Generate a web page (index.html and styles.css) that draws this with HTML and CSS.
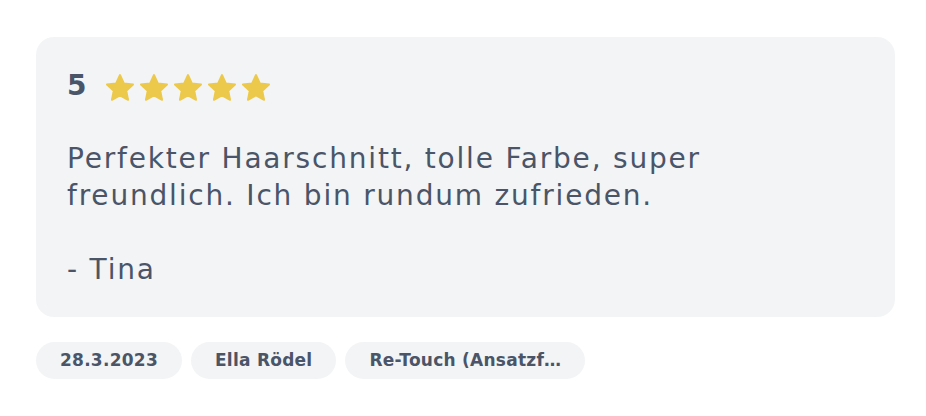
FILE: index.html
```html
<!DOCTYPE html>
<html lang="de">
<head>
<meta charset="utf-8">
<link rel="stylesheet" href="styles.css">
</head>
<body>
<div class="wrap">
  <div class="card">
    <div class="rating">
      <span class="score">5</span>
      <div class="stars">
        <svg class="star" viewBox="0 0 24 24"><path d="M12 1.6L15.12 8.31 22.46 9.2 17.04 14.24 18.47 21.5 12 17.9 5.53 21.5 6.96 14.24 1.54 9.2 8.88 8.31Z"/></svg>
        <svg class="star" viewBox="0 0 24 24"><path d="M12 1.6L15.12 8.31 22.46 9.2 17.04 14.24 18.47 21.5 12 17.9 5.53 21.5 6.96 14.24 1.54 9.2 8.88 8.31Z"/></svg>
        <svg class="star" viewBox="0 0 24 24"><path d="M12 1.6L15.12 8.31 22.46 9.2 17.04 14.24 18.47 21.5 12 17.9 5.53 21.5 6.96 14.24 1.54 9.2 8.88 8.31Z"/></svg>
        <svg class="star" viewBox="0 0 24 24"><path d="M12 1.6L15.12 8.31 22.46 9.2 17.04 14.24 18.47 21.5 12 17.9 5.53 21.5 6.96 14.24 1.54 9.2 8.88 8.31Z"/></svg>
        <svg class="star" viewBox="0 0 24 24"><path d="M12 1.6L15.12 8.31 22.46 9.2 17.04 14.24 18.47 21.5 12 17.9 5.53 21.5 6.96 14.24 1.54 9.2 8.88 8.31Z"/></svg>
      </div>
    </div>
    <p class="text">Perfekter Haarschnitt, tolle Farbe, super<br>freundlich. Ich bin rundum zufrieden.<br><br>- Tina</p>
  </div>
  <div class="tags">
    <span class="tag">28.3.2023</span>
    <span class="tag">Ella Rödel</span>
    <span class="tag">Re-Touch (Ansatzf…</span>
  </div>
</div>
</body>
</html>
```

FILE: styles.css
```css
* { box-sizing: border-box; }
html, body { margin: 0; padding: 0; background: #ffffff; }
body {
  font-family: "DejaVu Sans", "Open Sans", sans-serif;
  color: #4a5568;
}
.wrap {
  padding: 37px 31px 0 36px;
}
.card {
  background: #f3f4f6;
  border-radius: 18px;
  padding: 32px 31px 31px 31px;
  height: 280px;
}
.rating {
  display: flex;
  align-items: center;
  gap: 19px;
}
.score {
  font-size: 28px;
  font-weight: 700;
  line-height: 34px;
}
.stars {
  display: flex;
  gap: 4px;
  padding-top: 3px;
}
.star {
  width: 30px;
  height: 30px;
  fill: #ecc94b;
  stroke: #ecc94b;
  stroke-width: 1.5;
  stroke-linejoin: round;
}
.text {
  margin: 37px 0 0 0;
  font-size: 28px;
  line-height: 37px;
  letter-spacing: 1.8px;
}
.tags {
  display: flex;
  gap: 9px;
  margin-top: 25px;
}
.tag {
  background: #f3f4f6;
  border-radius: 999px;
  height: 37px;
  line-height: 37px;
  padding: 0 24px;
  font-size: 17px;
  font-weight: 700;
  letter-spacing: 0.25px;
  white-space: nowrap;
}
```
